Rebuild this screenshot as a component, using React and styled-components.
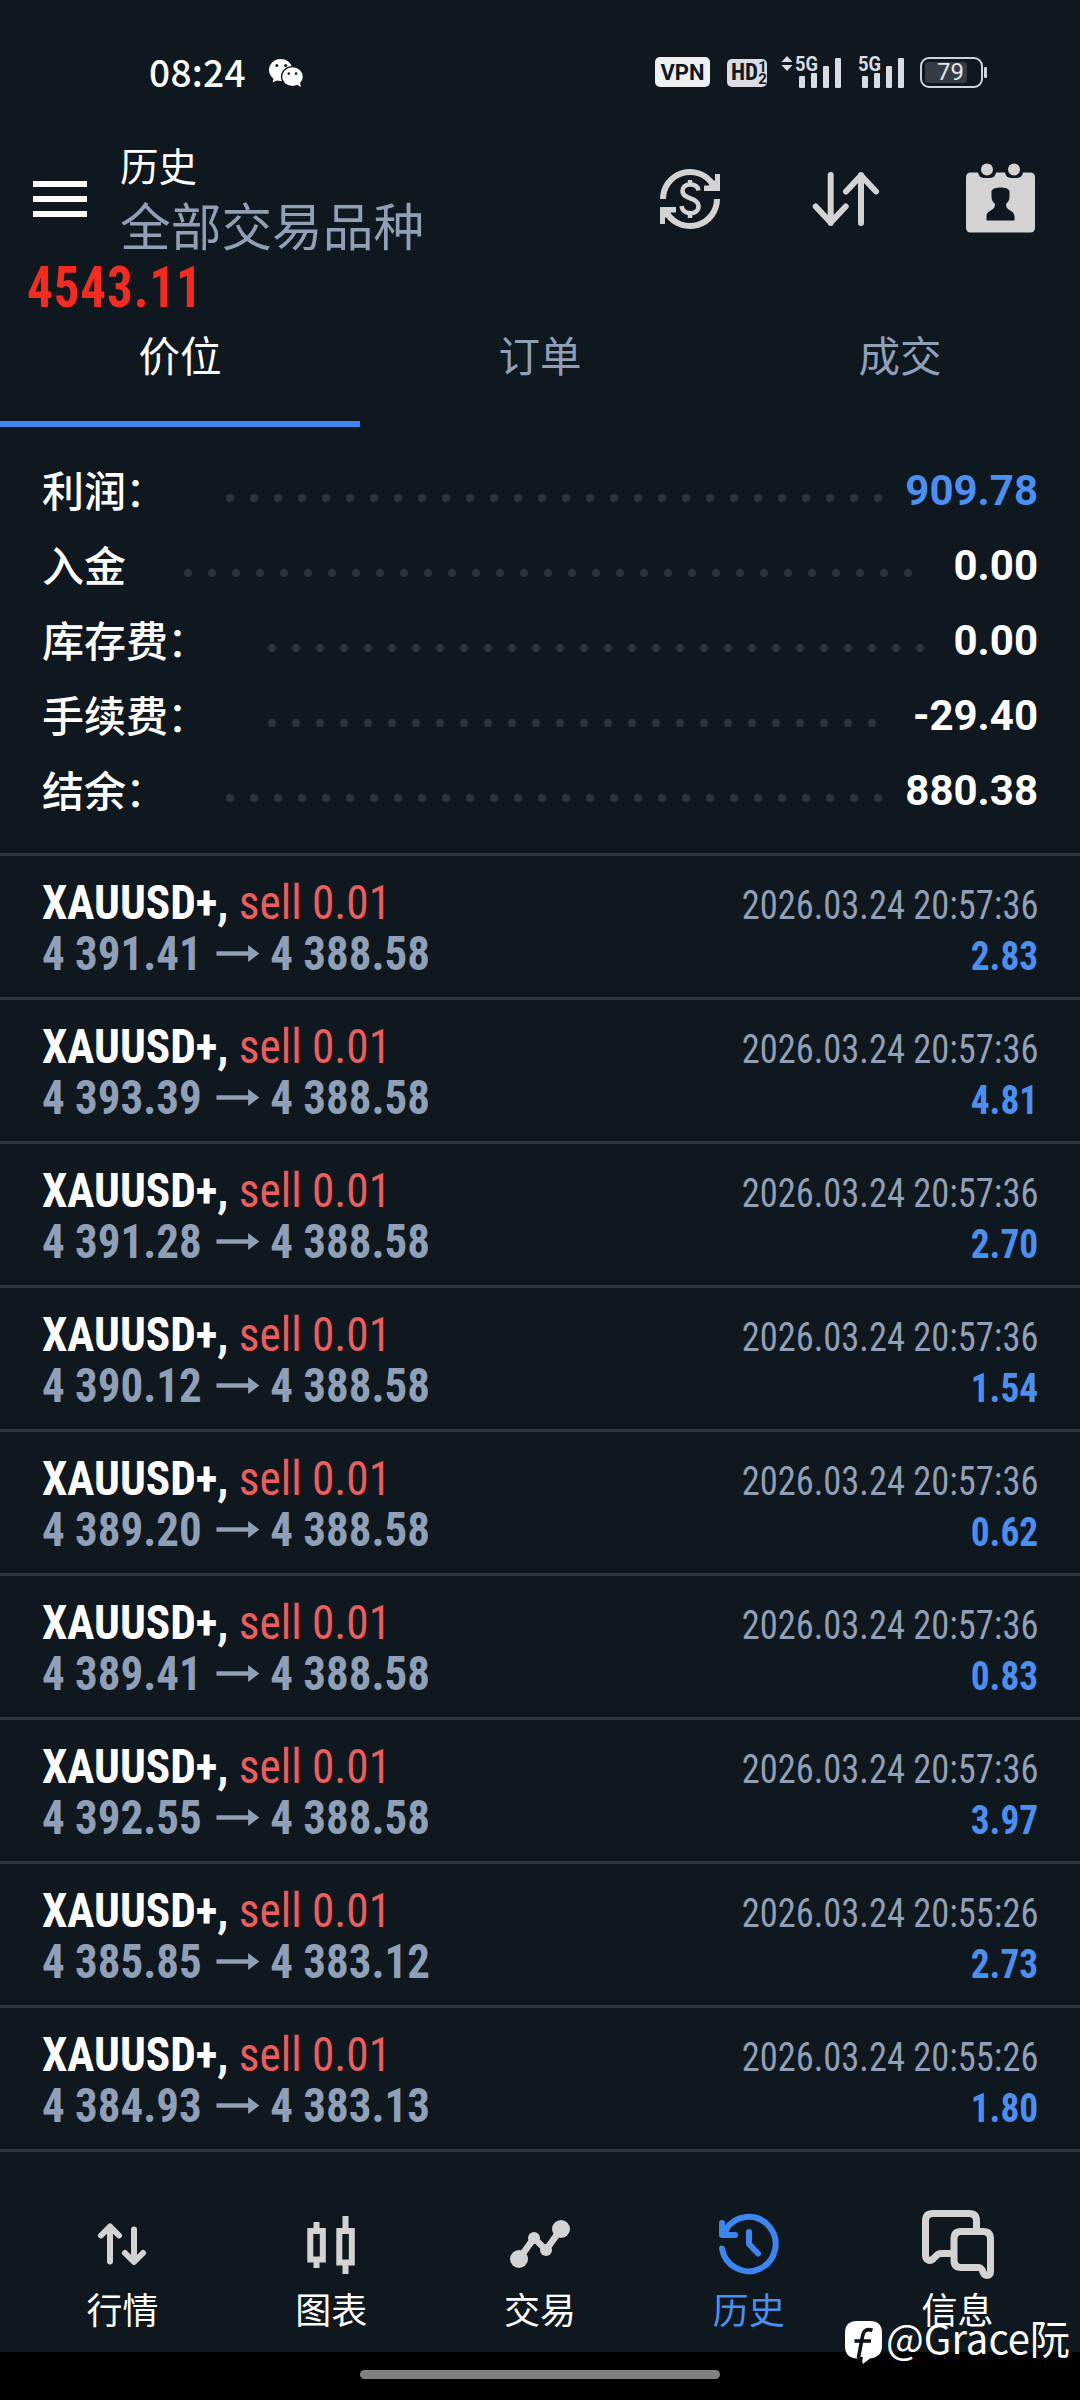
import React from "react";
import styled, { createGlobalStyle } from "styled-components";

const cjk = `"Noto Sans CJK SC", sans-serif`;
const latin = `Roboto, "Noto Sans CJK SC", sans-serif`;
const narrow = `"Roboto Condensed", Roboto, "Noto Sans CJK SC", sans-serif`;

const color = {
  bg: "#0f171f",
  line: "#2c343f",
  text: "#ffffff",
  muted: "#8f9fb6",
  blue: "#4a90f2",
  accent: "#3d85f0",
  red: "#ee5c5c",
  icon: "#d3d3d3",
};

const GlobalStyle = createGlobalStyle`
  * { box-sizing: border-box; }
  body { margin: 0; background: ${color.bg}; }
`;

const Screen = styled.div`
  position: relative;
  width: 1080px;
  height: 2400px;
  display: flex;
  flex-direction: column;
  overflow: hidden;
  background: ${color.bg};
  color: ${color.text};
  font-family: ${cjk};
  white-space: nowrap;
`;

/* ---------- status bar ---------- */

const StatusBar = styled.div`
  height: 120px;
  padding: 49px 93px 0 149px;
  display: flex;
  justify-content: space-between;
  align-items: flex-start;
`;

const StatusGroup = styled.div`
  height: 46px;
  display: flex;
  align-items: center;
`;

const Clock = styled.span`
  width: 97px;
  margin: 0 23px 3px 0;
  font-size: 37px;
  font-weight: 500;
  line-height: 46px;
  letter-spacing: 0.3px;
`;

const Vpn = styled.span`
  width: 55px;
  height: 30px;
  margin-right: 17px;
  border-radius: 5px;
  background: #eef1f4;
  color: ${color.bg};
  font: 700 22px/31px ${latin};
  text-align: center;
`;

const Hd = styled.span`
  width: 40px;
  height: 28px;
  margin: 2px 14px 0 0;
  padding-left: 4px;
  border-radius: 5px;
  background: #d9dde2;
  color: ${color.bg};
  display: flex;
  align-items: center;
  font: 700 23px/28px ${narrow};
  font-stretch: 75%;
`;

const HdStack = styled.span`
  display: flex;
  flex-direction: column;
  font: 700 15px/12px ${latin};
`;

const SignalSvg = styled.svg`
  width: ${(p) => p.$w}px;
  height: 34px;
  margin-right: ${(p) => p.$gap}px;
  margin-bottom: 3px;
  overflow: visible;
  fill: #d9dde2;
  font: 700 21px ${latin};
`;

const Battery = styled.span`
  width: 63px;
  height: 31px;
  padding: 3px;
  border: 2px solid #cfd4da;
  border-radius: 9px;
  font: 400 24px/21px ${latin};
  color: #e3e6ea;
`;

const BatteryFill = styled.span`
  display: block;
  width: 42px;
  height: 21px;
  padding-left: 12px;
  border-radius: 3px;
  background: #343c46;
`;

const BatteryTip = styled.span`
  width: 3px;
  height: 11px;
  margin-left: 1px;
  border-radius: 1px;
  background: #cfd4da;
`;

/* ---------- header ---------- */

const Header = styled.header`
  height: 140px;
  padding: 18px 45px 0 33px;
  display: flex;
  align-items: center;
`;

const MenuButton = styled.div`
  width: 54px;
  margin-right: 33px;
  display: flex;
  flex-direction: column;
  gap: 9px;
`;

const MenuBar = styled.span`
  height: 6px;
  background: ${color.text};
`;

const Titles = styled.div`
  flex: 1;
  margin-bottom: 4px;
`;

const Title = styled.div`
  font-size: 38.5px;
  line-height: 54px;
`;

const Subtitle = styled.div`
  font-size: 50.7px;
  line-height: 66px;
  color: ${color.muted};
`;

const Icon = styled.svg`
  display: block;
  flex: none;
  width: ${(p) => p.$w}px;
  height: ${(p) => p.$h}px;
  margin-left: ${(p) => p.$ml || 0}px;
  overflow: visible;
`;

const Quote = styled.div`
  height: 55px;
  margin-left: 27px;
  font: 700 57px/55px ${narrow};
  font-stretch: 75%;
  letter-spacing: 1px;
  color: #f52b20;
  transform: scaleX(0.895);
  transform-origin: left;
`;

/* ---------- tabs ---------- */

const Tabs = styled.nav`
  height: 112px;
  display: grid;
  grid-template-columns: repeat(3, 1fr);
`;

const Tab = styled.div`
  padding-top: 14px;
  border-bottom: 6px solid ${(p) => (p.$active ? color.accent : "transparent")};
  font-size: 41.5px;
  line-height: 50px;
  text-align: center;
  color: ${(p) => (p.$active ? color.text : color.muted)};
`;

/* ---------- summary ---------- */

const Summary = styled.section`
  height: 426px;
  padding: 24px 42px 0;
`;

const SummaryRow = styled.div`
  height: 75px;
  display: flex;
  align-items: center;
`;

const SummaryLabel = styled.span`
  font-size: 42px;
  font-weight: 500;
  line-height: 75px;
`;

const Colon = styled.span`
  margin: 0 1px 0 -1px;
  font-weight: 400;
`;

const Leader = styled.span`
  flex: 1;
  height: 8px;
  margin: 19px 14px 0 50px;
  display: flex;
  flex-wrap: wrap;
  overflow: hidden;
`;

const Dot = styled.i`
  width: 8px;
  height: 8px;
  margin: 0 8px;
  border-radius: 50%;
  background: #2b333c;
`;

const SummaryValue = styled.span`
  margin-top: 5px;
  font: 700 42px/50px ${latin};
  color: ${(p) => (p.$blue ? color.blue : color.text)};
`;

/* ---------- deals ---------- */

const Deal = styled.article`
  height: 144px;
  padding: 21px 42px 0;
  border-top: 3px solid ${color.line};
  font-family: ${narrow};
  font-stretch: 75%;
`;

const DealLine = styled.div`
  height: 51px;
  display: flex;
  justify-content: space-between;
  align-items: baseline;
  font-size: 48px;
  line-height: 51px;
`;

const Instrument = styled.span`
  transform: scaleX(0.944);
  transform-origin: left;
`;

const Symbol = styled.b`
  font-weight: 700;
`;

const Side = styled.span`
  color: ${color.red};
`;

const Prices = styled.span`
  display: flex;
  align-items: baseline;
  font-weight: 700;
  color: ${color.muted};
  transform: scaleX(0.937);
  transform-origin: left;
`;

const Arrow = styled.svg`
  width: 46px;
  height: 17px;
  margin: 0 12px 0 15px;
  align-self: center;
  fill: ${color.muted};
`;

const DealTime = styled.span`
  font-size: 40px;
  color: ${color.muted};
  transform: scaleX(0.912);
  transform-origin: right;
`;

const Profit = styled.span`
  font-size: 40px;
  font-weight: 700;
  color: ${color.blue};
  transform: scaleX(0.935);
  transform-origin: right;
`;

/* ---------- bottom navigation ---------- */

const BottomNav = styled.nav`
  height: 203px;
  padding: 0 18px;
  border-top: 3px solid ${color.line};
  display: grid;
  grid-template-columns: repeat(5, 1fr);
`;

const NavItem = styled.div`
  padding-top: 52px;
  display: flex;
  flex-direction: column;
  align-items: center;
  color: ${(p) => (p.$active ? color.blue : color.text)};
`;

const NavIconBox = styled.div`
  height: 80px;
  display: flex;
  align-items: center;
`;

const NavLabel = styled.div`
  font-size: 36px;
  line-height: 48px;
`;

const HomeBar = styled.div`
  height: 48px;
  padding-top: 18px;
  background: #000;
`;

const HomePill = styled.div`
  width: 360px;
  height: 9px;
  margin: 0 auto;
  border-radius: 5px;
  background: #808080;
`;

const Watermark = styled.div`
  position: absolute;
  right: 10px;
  bottom: 35px;
  height: 46px;
  display: flex;
  align-items: center;
  gap: 4px;
  font-size: 40px;
  line-height: 46px;
`;

const Handle = styled.span`
  margin-bottom: 11px;
`;

/* ---------- drawings ---------- */

const WeChat = () => (
  <Icon $w={34} $h={29} viewBox="269 58 34 29">
    <ellipse cx="280.7" cy="70" rx="11.7" ry="11" fill="#fff" />
    <path d="M274 77l-1.4 5.6 6-3z" fill="#fff" />
    <ellipse cx="292.5" cy="76.5" rx="11.6" ry="10.6" fill={color.bg} />
    <ellipse cx="292.5" cy="76.7" rx="10.3" ry="9.4" fill="#fff" />
    <path d="M296 84l5 3-1.2-5.5z" fill="#fff" />
    <circle cx="276.8" cy="65.5" r="1.5" fill={color.bg} />
    <circle cx="285.6" cy="65.5" r="1.5" fill={color.bg} />
    <circle cx="288.8" cy="73.6" r="1.3" fill={color.bg} />
    <circle cx="296" cy="73.6" r="1.3" fill={color.bg} />
  </Icon>
);

const Signal = ({ updown }) => {
  const left = updown ? 18 : 4;
  return (
    <SignalSvg $w={left + 42} $gap={updown ? 17 : 16} viewBox={`0 0 ${left + 42} 34`}>
      {updown && <path d="M6 2l5.5 6h-11zM6 17l5.5-6h-11z" />}
      <text x={left - 4} y="17" textLength="23" lengthAdjust="spacingAndGlyphs">
        5G
      </text>
      <rect x={left} y="22" width="6" height="12" rx="1" />
      <rect x={left + 12} y="19" width="6" height="15" rx="1" />
      <rect x={left + 24} y="12" width="6" height="22" rx="1" />
      <rect x={left + 36} y="4" width="6" height="30" rx="1" />
    </SignalSvg>
  );
};

const ExchangeIcon = () => (
  <Icon $w={60} $h={60} viewBox="660 169 60 60">
    <g fill="none" stroke={color.icon}>
      <path d="M663 199a27 27 0 0 1 49.5-15" strokeWidth="6" />
      <path d="M717 199a27 27 0 0 1-49.5 15" strokeWidth="6" />
      <path
        d="M698.5 190.5c-.6-4-4-6-8.300-6-4.800 0-7.700 2.300-7.700 6.200 0 9.500 16 6 16 15.800 0 4.200-3.400 6.700-8.300 6.700-4.700 0-8.200-2.600-8.600-7.200M690 180v5M690 212v6"
        strokeWidth="4.500"
      />
    </g>
    <path d="M720 174v17h-16v-5.500h5l6-5.500V174z" fill={color.icon} />
    <path d="M660 224v-17h16v5.500h-5l-6 5.500v6z" fill={color.icon} />
  </Icon>
);

const SortIcon = () => (
  <Icon $w={66} $h={54} $ml={93} viewBox="813 172 66 54">
    <path
      d="M830.700 175v48M815.700 206.500l15 16 15-16M861 175v48M846 191.500l15-16 15 16"
      fill="none"
      stroke={color.icon}
      strokeWidth="6"
      strokeLinecap="round"
      strokeLinejoin="round"
    />
  </Icon>
);

const CalendarIcon = () => (
  <Icon $w={69} $h={69} $ml={87} viewBox="966 164.500 69 69">
    <rect x="966" y="172" width="69" height="60" rx="4.500" fill={color.icon} />
    <rect x="978" y="160" width="18" height="17.500" rx="6" fill={color.bg} />
    <rect x="1005" y="160" width="18" height="17.500" rx="6" fill={color.bg} />
    <circle cx="987" cy="169" r="6" fill={color.icon} />
    <circle cx="1014" cy="169" r="6" fill={color.icon} />
    <path
      d="M991.500 190.500c1-2.500 5-3.500 9-3.500s8 1 9 3.500v6c0 3-1.500 5-3.500 7 0 8 8.500 5 8.500 13v3.500h-28v-3.500c0-8 8.500-5 8.500-13-2-2-3.500-4-3.500-7z"
      fill={color.bg}
    />
  </Icon>
);

const QuotesIcon = () => (
  <Icon $w={48} $h={43} viewBox="98 2222.500 48 43">
    <path
      d="M110 2226v35M101 2235l9-9 9 9M134 2229v32M125 2252.500l9 9 9-9"
      fill="none"
      stroke={color.icon}
      strokeWidth="6"
      strokeLinecap="round"
      strokeLinejoin="round"
    />
  </Icon>
);

const ChartIcon = () => (
  <Icon $w={48} $h={58} viewBox="307 2215 48 58">
    <path
      d="M310.300 2231h12.500v28.500h-12.500zM339.300 2231h12.500v31.500h-12.500zM316.500 2222v6M316.500 2262v6M345.500 2216v12M345.500 2264v10"
      fill="none"
      stroke={color.icon}
      strokeWidth="6"
    />
  </Icon>
);

const TradeIcon = () => (
  <Icon $w={60} $h={48} viewBox="510 2220 60 48">
    <path d="M519 2259l15-21 12 12 15-21" fill="none" stroke={color.icon} strokeWidth="6.500" />
    <circle cx="519" cy="2259" r="9" fill={color.icon} />
    <circle cx="534" cy="2238" r="6" fill={color.icon} />
    <circle cx="546" cy="2250" r="6" fill={color.icon} />
    <circle cx="561" cy="2229" r="9" fill={color.icon} />
  </Icon>
);

const HistoryIcon = () => (
  <Icon $w={60} $h={60} viewBox="719 2214 60 60">
    <g
      fill="none"
      stroke={color.accent}
      strokeWidth="6"
      strokeLinecap="round"
      strokeLinejoin="round"
    >
      <path d="M722 2248.500a27 27.200 0 1 0 3.500-18.500" />
      <path d="M722 2223v12h13" />
      <path d="M723 2234.500l3.500-5" />
      <path d="M749 2232v12l9 9.500" />
    </g>
  </Icon>
);

const MessageIcon = () => (
  <Icon $w={72} $h={69} viewBox="922 2210 72 69">
    <g fill="none" stroke={color.icon} strokeWidth="7" strokeLinejoin="round" strokeLinecap="round">
      <path d="M976.500 2228v-7q0-7.500-7.500-7.500h-36q-7.500 0-7.500 7.500v34c0 5 4 7 7.500 4 4.500-4.500 5-5.500 9-5.500h8" />
      <path d="M961 2231.500h22q7.500 0 7.500 7.500v33c0 4.500-6.500 4.500-7.500 0-1.500-4-2.500-4.500-6-4.500h-16q-7 0-7-7.500v-21q0-7.500 7-7.500z" />
    </g>
  </Icon>
);

const MarkLogo = () => (
  <Icon $w={37} $h={43} viewBox="0 0 37 43">
    <path
      d="M12 0h13q12 0 12 12v13q0 11-12 12.500L18 43l-1.500-5.500H12Q0 37 0 25V12Q0 0 12 0z"
      fill="#fff"
    />
    <path
      d="M27.500 9.300c-6-2-9 .5-10 6l-4 21M9.500 20h16.500"
      fill="none"
      stroke="#0b1117"
      strokeWidth="3.600"
    />
    <path d="M11.500 36l5 7 1.500-7z" fill="#0b0f14" />
  </Icon>
);

/* ---------- data ---------- */

const summary = [
  { label: "利润", colon: true, value: "909.78", blue: true },
  { label: "入金", value: "0.00" },
  { label: "库存费", colon: true, value: "0.00" },
  { label: "手续费", colon: true, value: "-29.40" },
  { label: "结余", colon: true, value: "880.38" },
];

const deals = [
  ["4 391.41", "4 388.58", "20:57:36", "2.83"],
  ["4 393.39", "4 388.58", "20:57:36", "4.81"],
  ["4 391.28", "4 388.58", "20:57:36", "2.70"],
  ["4 390.12", "4 388.58", "20:57:36", "1.54"],
  ["4 389.20", "4 388.58", "20:57:36", "0.62"],
  ["4 389.41", "4 388.58", "20:57:36", "0.83"],
  ["4 392.55", "4 388.58", "20:57:36", "3.97"],
  ["4 385.85", "4 383.12", "20:55:26", "2.73"],
  ["4 384.93", "4 383.13", "20:55:26", "1.80"],
];

const navItems = [
  { label: "行情", icon: <QuotesIcon /> },
  { label: "图表", icon: <ChartIcon /> },
  { label: "交易", icon: <TradeIcon /> },
  { label: "历史", icon: <HistoryIcon />, active: true },
  { label: "信息", icon: <MessageIcon /> },
];

const dots = Array.from({ length: 40 }, (_, i) => i);

export default function App() {
  return (
    <>
      <GlobalStyle />
      <Screen>
        <StatusBar>
          <StatusGroup>
            <Clock>08:24</Clock>
            <WeChat />
          </StatusGroup>
          <StatusGroup>
            <Vpn>VPN</Vpn>
            <Hd>
              HD
              <HdStack>
                <span>1</span>
                <span>2</span>
              </HdStack>
            </Hd>
            <Signal updown />
            <Signal />
            <Battery>
              <BatteryFill>79</BatteryFill>
            </Battery>
            <BatteryTip />
          </StatusGroup>
        </StatusBar>

        <Header>
          <MenuButton>
            <MenuBar />
            <MenuBar />
            <MenuBar />
          </MenuButton>
          <Titles>
            <Title>历史</Title>
            <Subtitle>全部交易品种</Subtitle>
          </Titles>
          <ExchangeIcon />
          <SortIcon />
          <CalendarIcon />
        </Header>

        <Quote>4543.11</Quote>

        <Tabs>
          <Tab $active>价位</Tab>
          <Tab>订单</Tab>
          <Tab>成交</Tab>
        </Tabs>

        <Summary>
          {summary.map((s) => (
            <SummaryRow key={s.label}>
              <SummaryLabel>
                {s.label}
                {s.colon && <Colon>：</Colon>}
              </SummaryLabel>
              <Leader>
                {dots.map((d) => (
                  <Dot key={d} />
                ))}
              </Leader>
              <SummaryValue $blue={s.blue}>{s.value}</SummaryValue>
            </SummaryRow>
          ))}
        </Summary>

        {deals.map(([open, close, time, profit], i) => (
          <Deal key={i}>
            <DealLine>
              <Instrument>
                <Symbol>XAUUSD+,</Symbol> <Side>sell 0.01</Side>
              </Instrument>
              <DealTime>2026.03.24 {time}</DealTime>
            </DealLine>
            <DealLine>
              <Prices>
                {open}
                <Arrow viewBox="0 0 46 17">
                  <path d="M0 6.200h34V0l12 8.500L34 17v-6.200H0z" />
                </Arrow>
                {close}
              </Prices>
              <Profit>{profit}</Profit>
            </DealLine>
          </Deal>
        ))}

        <BottomNav>
          {navItems.map((n) => (
            <NavItem key={n.label} $active={n.active}>
              <NavIconBox>{n.icon}</NavIconBox>
              <NavLabel>{n.label}</NavLabel>
            </NavItem>
          ))}
        </BottomNav>

        <HomeBar>
          <HomePill />
        </HomeBar>

        <Watermark>
          <MarkLogo />
          <Handle>@Grace阮</Handle>
        </Watermark>
      </Screen>
    </>
  );
}
